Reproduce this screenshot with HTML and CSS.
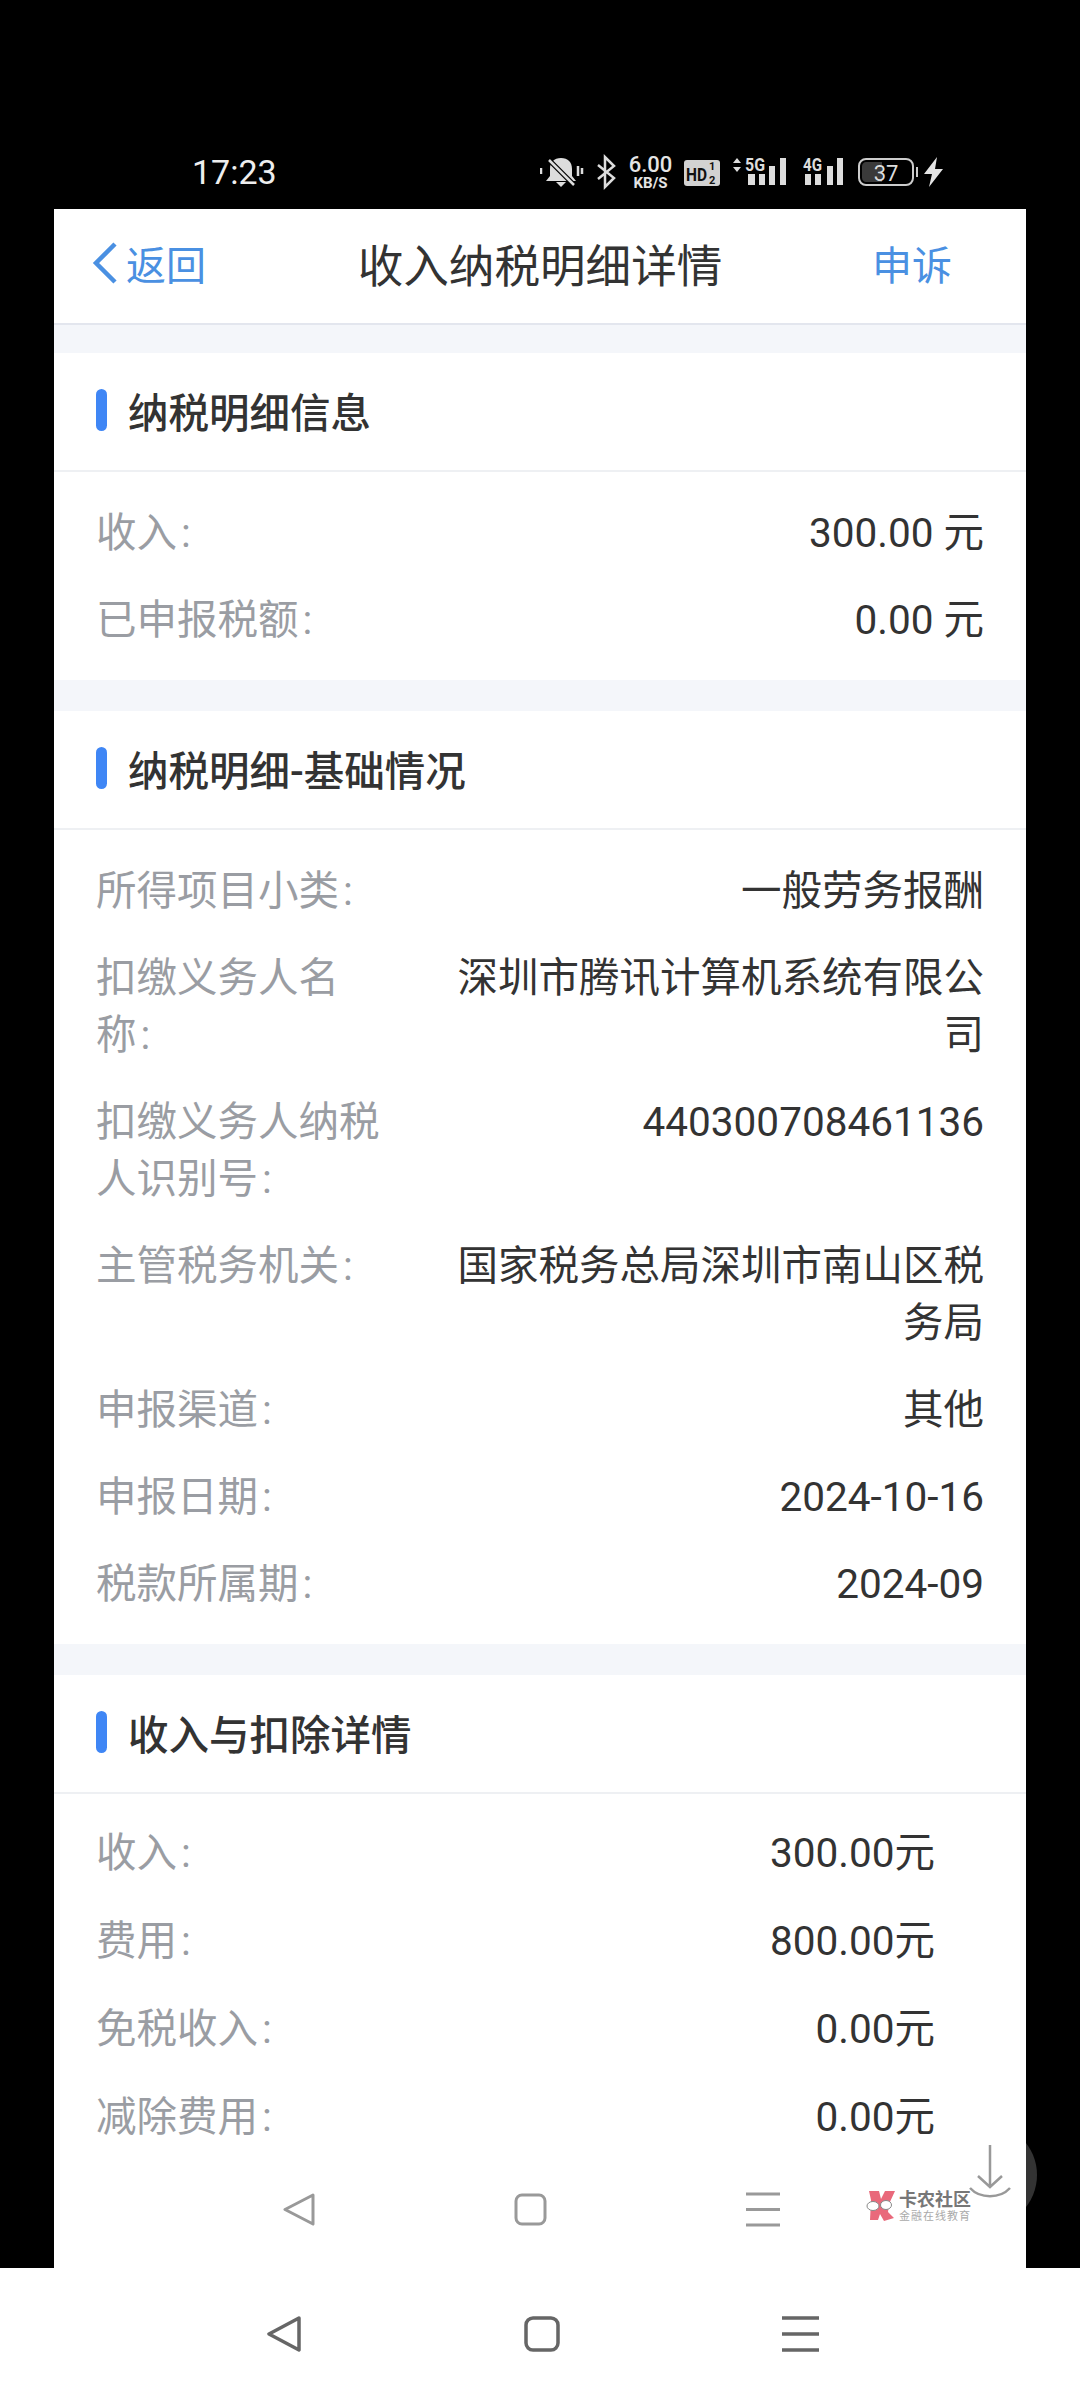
FILE: index.html

```html
<!DOCTYPE html>
<html lang="zh-CN">
<head>
  <meta charset="UTF-8">
  <meta name="viewport" content="width=device-width, initial-scale=1.0">
  <title>收入纳税明细详情</title>
  <link rel="stylesheet" href="styles.css">
</head>
<body>
  <!-- 悬浮球,只露出白色页面右边的一点 -->
  <div class="float-ball"></div>

  <!-- 状态栏 -->
  <div class="status">
    <span class="time">17:23</span>
    <svg class="status-icons" width="403" height="50" viewBox="0 -8 403 50">
      <!-- 静音 -->
      <path d="M21 3c-7 0-11 4-11 11v7l-4 5h30l-4-5v-7c0-7-4-11-11-11z" fill="#ddd"/>
      <path d="M16 27h10l-5 5z" fill="#ddd"/>
      <path d="M8 4l27 27" stroke="#000" stroke-width="5"/>
      <path d="M9 5l25 25" stroke="#ddd" stroke-width="2.5"/>
      <path d="M1 13v6M38 11v10M42 13v6" stroke="#ddd" stroke-width="2.5"/>
      <!-- 蓝牙 -->
      <path d="M58 10l16 13-9 9V2l9 9-16 13" fill="none" stroke="#ddd" stroke-width="2.5"/>
      <!-- 网速 -->
      <text class="st-num" x="110.5" y="17" text-anchor="middle">6.00</text>
      <text class="st-unit" x="110.5" y="33" text-anchor="middle">KB/S</text>
      <!-- HD -->
      <rect x="144" y="5" width="36" height="26" rx="3" fill="#d2d2d2"/>
      <text class="st-hd" x="146" y="26" textLength="21" lengthAdjust="spacingAndGlyphs">HD</text>
      <text class="st-frac" x="169" y="15">1</text>
      <text class="st-frac" x="169" y="29">2</text>
      <!-- 5G -->
      <path d="M197 3l4 5h-8zM197 17l4-5h-8z" fill="#ddd"/>
      <text class="st-net" x="205" y="16" textLength="20" lengthAdjust="spacingAndGlyphs">5G</text>
      <path d="M208 19h7v11h-7zM219 19h6v11h-6zM229 11h6v19h-6zM240 3h6v27h-6z" fill="#ddd"/>
      <!-- 4G -->
      <text class="st-net" x="263" y="16" textLength="19" lengthAdjust="spacingAndGlyphs">4G</text>
      <path d="M265 19h6v11h-6zM275 19h6v11h-6zM287 11h6v19h-6zM297 3h6v27h-6z" fill="#ddd"/>
      <!-- 电池 -->
      <rect x="319" y="4" width="54" height="26" rx="7" fill="none" stroke="#ccc" stroke-width="2"/>
      <path d="M322 11c0-2 2-4 4-4h16v20h-16c-2 0-4-2-4-4z" fill="#3a3a3a"/>
      <text class="st-batt" x="346" y="26" text-anchor="middle">37</text>
      <rect x="376" y="12" width="2" height="10" fill="#ccc"/>
      <path d="M397 2l-13 17h8l-3 13 14-18h-8z" fill="#e4e4e4"/>
    </svg>
  </div>

  <div class="app">
    <!-- 顶部导航 -->
    <div class="nav">
      <div class="nav-back">
        <svg width="26" height="42" viewBox="0 0 26 42"><path d="M23 2L4 21l19 19" fill="none" stroke="#4a90e2" stroke-width="4.5"/></svg>
        <span>返回</span>
      </div>
      <div class="nav-title">收入纳税明细详情</div>
      <div class="nav-action">申诉</div>
    </div>

    <div class="list">
      <div class="section">
        <div class="section-head"><i class="bar"></i>纳税明细信息</div>
        <div class="rows">
          <div class="row"><div class="label">收入&nbsp;:</div><div class="value">300.00 元</div></div>
          <div class="row"><div class="label">已申报税额&nbsp;:</div><div class="value">0.00 元</div></div>
        </div>
      </div>

      <div class="section">
        <div class="section-head"><i class="bar"></i>纳税明细-基础情况</div>
        <div class="rows">
          <div class="row"><div class="label">所得项目小类&nbsp;:</div><div class="value">一般劳务报酬</div></div>
          <div class="row"><div class="label">扣缴义务人名称&nbsp;:</div><div class="value">深圳市腾讯计算机系统有限公司</div></div>
          <div class="row"><div class="label">扣缴义务人纳税人识别号&nbsp;:</div><div class="value">440300708461136</div></div>
          <div class="row"><div class="label">主管税务机关&nbsp;:</div><div class="value">国家税务总局深圳市南山区税务局</div></div>
          <div class="row"><div class="label">申报渠道&nbsp;:</div><div class="value">其他</div></div>
          <div class="row"><div class="label">申报日期&nbsp;:</div><div class="value">2024-10-16</div></div>
          <div class="row"><div class="label">税款所属期&nbsp;:</div><div class="value">2024-09</div></div>
        </div>
      </div>

      <div class="section">
        <div class="section-head"><i class="bar"></i>收入与扣除详情</div>
        <div class="rows rows-inset">
          <div class="row"><div class="label">收入&nbsp;:</div><div class="value">300.00元</div></div>
          <div class="row"><div class="label">费用&nbsp;:</div><div class="value">800.00元</div></div>
          <div class="row"><div class="label">免税收入&nbsp;:</div><div class="value">0.00元</div></div>
          <div class="row"><div class="label">减除费用&nbsp;:</div><div class="value">0.00元</div></div>
        </div>
      </div>
    </div>

    <!-- 截图里的导航条 -->
    <div class="app-keys">
      <svg width="32" height="33" viewBox="0 0 32 33"><path d="M30 2L2 16.5 30 31z" fill="none" stroke="#999" stroke-width="3" stroke-linejoin="round"/></svg>
      <svg width="33" height="33" viewBox="0 0 33 33"><rect x="2" y="2" width="29" height="29" rx="6" fill="none" stroke="#999" stroke-width="3"/></svg>
      <svg width="34" height="35" viewBox="0 0 34 35"><path d="M0 2h34M0 17.5h34M0 33h34" stroke="#999" stroke-width="3"/></svg>

      <div class="watermark">
        <svg width="32" height="32" viewBox="0 0 32 32">
          <path d="M4 1h10l2 8 4-8h10l-6 13-1 8 6 6-10 3-4-7-2 6H5l1-20z" fill="#e9697b"/>
          <ellipse cx="8" cy="16" rx="6" ry="4.5" fill="#fff" stroke="#888" stroke-width="1"/>
          <ellipse cx="21" cy="15" rx="5.5" ry="4.5" fill="#fff" stroke="#888" stroke-width="1"/>
        </svg>
        <div class="watermark-text">
          <div class="wm-name">卡农社区</div>
          <div class="wm-sub">金融在线教育</div>
        </div>
      </div>

      <svg class="scroll-down" width="44" height="56" viewBox="0 0 44 56">
        <path d="M22 0v41M10 31l12 11 12-11" fill="none" stroke="#999" stroke-width="2.5"/>
        <path d="M2 43c10 11 30 11 40 0" fill="none" stroke="#999" stroke-width="2.5"/>
      </svg>
    </div>
  </div>

  <!-- 手机系统导航条 -->
  <div class="sys-keys">
    <svg width="36" height="36" viewBox="0 0 36 36"><path d="M33 2L3 18l30 16z" fill="none" stroke="#666" stroke-width="3.5" stroke-linejoin="round"/></svg>
    <svg width="36" height="36" viewBox="0 0 36 36"><rect x="2" y="2" width="32" height="32" rx="7" fill="none" stroke="#666" stroke-width="3.5"/></svg>
    <svg width="37" height="36" viewBox="0 0 37 36"><path d="M0 2h37M0 18h37M0 34h37" stroke="#666" stroke-width="3.5"/></svg>
  </div>
</body>
</html>
```

FILE: styles.css

```css
body, html {
  margin: 0;
  padding: 0;
  width: 1080px;
  height: 2400px;
  overflow: hidden;
  background: #000;
  font-family: Roboto, "Noto Sans CJK SC", sans-serif;
}

body {
  display: flex;
  flex-direction: column;
  position: relative;
}

.float-ball {
  position: absolute;
  left: 933px;
  top: 2123px;
  width: 104px;
  height: 104px;
  border-radius: 50%;
  background: #333;
}

/* 状态栏 */
.status {
  height: 74px;
  padding-top: 135px;
  display: flex;
  align-items: center;
  justify-content: space-between;
  color: #eee;
}

.time {
  margin-left: 192px;
  font-size: 34px;
}

.status-icons {
  margin-right: 137px;
  font-family: Roboto, sans-serif;
}

.st-num { font-size: 22px; font-weight: 500; fill: #e4e4e4; }
.st-unit { font-size: 15px; font-weight: 700; fill: #e4e4e4; }
.st-hd { font-size: 19px; font-weight: 700; fill: #111; }
.st-frac { font-size: 11px; font-weight: 700; fill: #111; }
.st-net { font-size: 18px; font-weight: 700; fill: #ddd; }
.st-batt { font-size: 22px; fill: #ddd; }

/* 页面 */
.app {
  position: relative;
  z-index: 1;
  height: 2059px;
  margin: 0 54px;
  background: #fff;
  display: flex;
  flex-direction: column;
  overflow: hidden;
}

.nav {
  height: 116px;
  flex: none;
  box-sizing: border-box;
  border-bottom: 2px solid #e3e6ee;
  display: flex;
  align-items: center;
  justify-content: space-between;
  padding: 0 74px 6px 38px;
  position: relative;
  font-size: 40px;
  color: #4a90e2;
}

.nav-back {
  display: flex;
  align-items: center;
  gap: 8px;
}

.nav-title {
  position: absolute;
  left: 0;
  right: 0;
  text-align: center;
  font-size: 45.6px;
  color: #333;
  pointer-events: none;
}

.list {
  flex: 1;
  overflow: hidden;
  background: #f4f6fa;
}

.section {
  margin-top: 28px;
  background: #fff;
}

.section + .section {
  margin-top: 31px;
}

.section-head {
  height: 119px;
  box-sizing: border-box;
  border-bottom: 2px solid #eef0f3;
  display: flex;
  align-items: center;
  gap: 21px;
  padding: 0 0 3px 42px;
  font-size: 40.5px;
  font-weight: 500;
  color: #333;
}

.bar {
  width: 11px;
  height: 42px;
  border-radius: 6px;
  background: #3f86f5;
}

.rows {
  padding: 18px 42px 16px;
}

.rows-inset {
  padding: 15px 91px 16px 42px;
}

.rows-inset .row {
  line-height: 58px;
}

.row {
  display: flex;
  justify-content: space-between;
  padding: 15px 0;
  font-size: 40.5px;
  line-height: 57px;
}

.label {
  width: 290px;
  flex: none;
  color: #9a9da3;
  word-spacing: -6px;
}

.value {
  width: 530px;
  text-align: right;
  color: #333;
}

/* 底部导航 */
.app-keys {
  position: relative;
  height: 118px;
  flex: none;
  background: #fff;
  display: flex;
  align-items: center;
  gap: 199px;
  padding-left: 229px;
}

.watermark {
  position: absolute;
  left: 811px;
  top: 40px;
  display: flex;
  gap: 2px;
}

.wm-name {
  font-size: 18px;
  line-height: 20px;
  font-weight: 700;
  color: #777;
}

.wm-sub {
  font-size: 11px;
  line-height: 13px;
  letter-spacing: 1px;
  color: #aaa;
}

.scroll-down {
  position: absolute;
  left: 914px;
  top: -5px;
}

.sys-keys {
  height: 132px;
  background: #fff;
  display: flex;
  align-items: center;
  gap: 222px;
  padding-left: 266px;
}
```
